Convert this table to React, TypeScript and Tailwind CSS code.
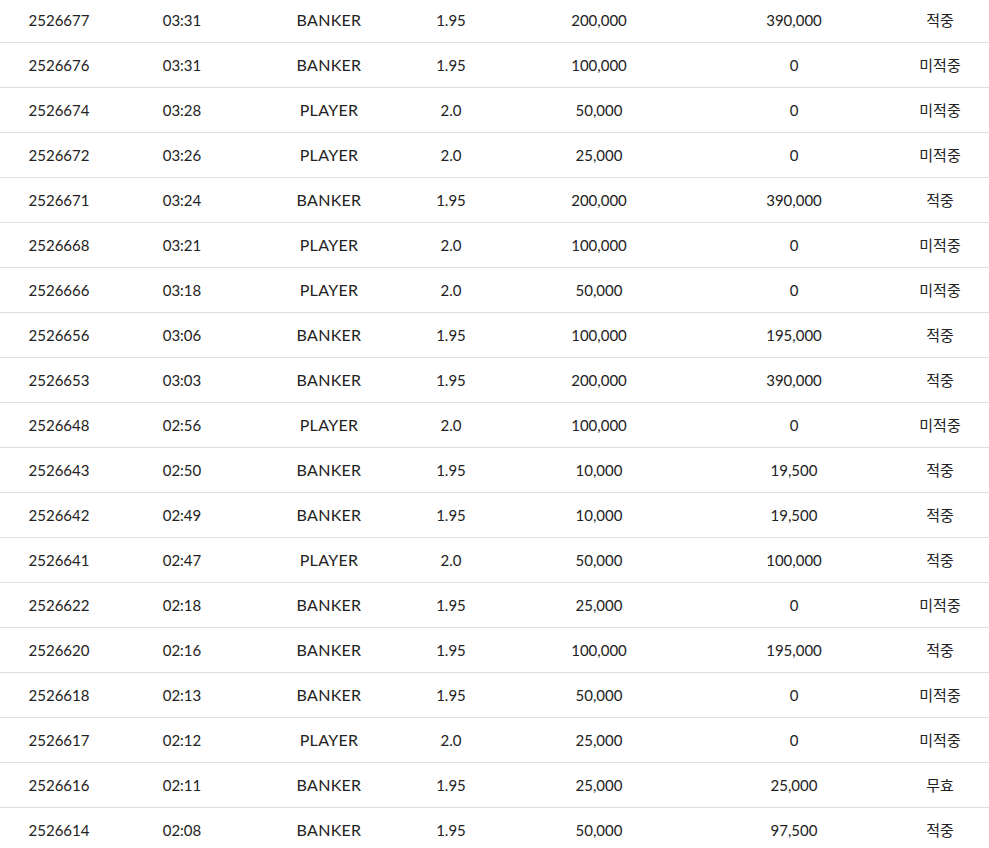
import React from 'react';

type Bet = {
  round: string;
  time: string;
  pick: string;
  odds: string;
  amount: string;
  payout: string;
  result: string;
};

const bets: Bet[] = [
  { round: '2526677', time: '03:31', pick: 'BANKER', odds: '1.95', amount: '200,000', payout: '390,000', result: '적중' },
  { round: '2526676', time: '03:31', pick: 'BANKER', odds: '1.95', amount: '100,000', payout: '0', result: '미적중' },
  { round: '2526674', time: '03:28', pick: 'PLAYER', odds: '2.0', amount: '50,000', payout: '0', result: '미적중' },
  { round: '2526672', time: '03:26', pick: 'PLAYER', odds: '2.0', amount: '25,000', payout: '0', result: '미적중' },
  { round: '2526671', time: '03:24', pick: 'BANKER', odds: '1.95', amount: '200,000', payout: '390,000', result: '적중' },
  { round: '2526668', time: '03:21', pick: 'PLAYER', odds: '2.0', amount: '100,000', payout: '0', result: '미적중' },
  { round: '2526666', time: '03:18', pick: 'PLAYER', odds: '2.0', amount: '50,000', payout: '0', result: '미적중' },
  { round: '2526656', time: '03:06', pick: 'BANKER', odds: '1.95', amount: '100,000', payout: '195,000', result: '적중' },
  { round: '2526653', time: '03:03', pick: 'BANKER', odds: '1.95', amount: '200,000', payout: '390,000', result: '적중' },
  { round: '2526648', time: '02:56', pick: 'PLAYER', odds: '2.0', amount: '100,000', payout: '0', result: '미적중' },
  { round: '2526643', time: '02:50', pick: 'BANKER', odds: '1.95', amount: '10,000', payout: '19,500', result: '적중' },
  { round: '2526642', time: '02:49', pick: 'BANKER', odds: '1.95', amount: '10,000', payout: '19,500', result: '적중' },
  { round: '2526641', time: '02:47', pick: 'PLAYER', odds: '2.0', amount: '50,000', payout: '100,000', result: '적중' },
  { round: '2526622', time: '02:18', pick: 'BANKER', odds: '1.95', amount: '25,000', payout: '0', result: '미적중' },
  { round: '2526620', time: '02:16', pick: 'BANKER', odds: '1.95', amount: '100,000', payout: '195,000', result: '적중' },
  { round: '2526618', time: '02:13', pick: 'BANKER', odds: '1.95', amount: '50,000', payout: '0', result: '미적중' },
  { round: '2526617', time: '02:12', pick: 'PLAYER', odds: '2.0', amount: '25,000', payout: '0', result: '미적중' },
  { round: '2526616', time: '02:11', pick: 'BANKER', odds: '1.95', amount: '25,000', payout: '25,000', result: '무효' },
  { round: '2526614', time: '02:08', pick: 'BANKER', odds: '1.95', amount: '50,000', payout: '97,500', result: '적중' },
];

const App = () => {
  return (
    <div
      className="min-h-screen bg-white text-[#222] overflow-hidden"
      style={{ fontFamily: 'Lato, "Noto Sans CJK KR", sans-serif' }}
    >
      <div className="-mt-[2px]">
        {bets.map((bet) => (
          <div
            key={bet.round}
            className="grid h-[45px] grid-cols-[96px_150px_144px_100px_196px_194px_98px] items-center border-b border-[#dedede] pl-[11px] text-center text-[15px]"
          >
            <span>{bet.round}</span>
            <span>{bet.time}</span>
            <span className="text-[16px] tracking-[0.3px]">{bet.pick}</span>
            <span>{bet.odds}</span>
            <span>{bet.amount}</span>
            <span>{bet.payout}</span>
            <span>{bet.result}</span>
          </div>
        ))}
      </div>
    </div>
  );
};

export default App;
